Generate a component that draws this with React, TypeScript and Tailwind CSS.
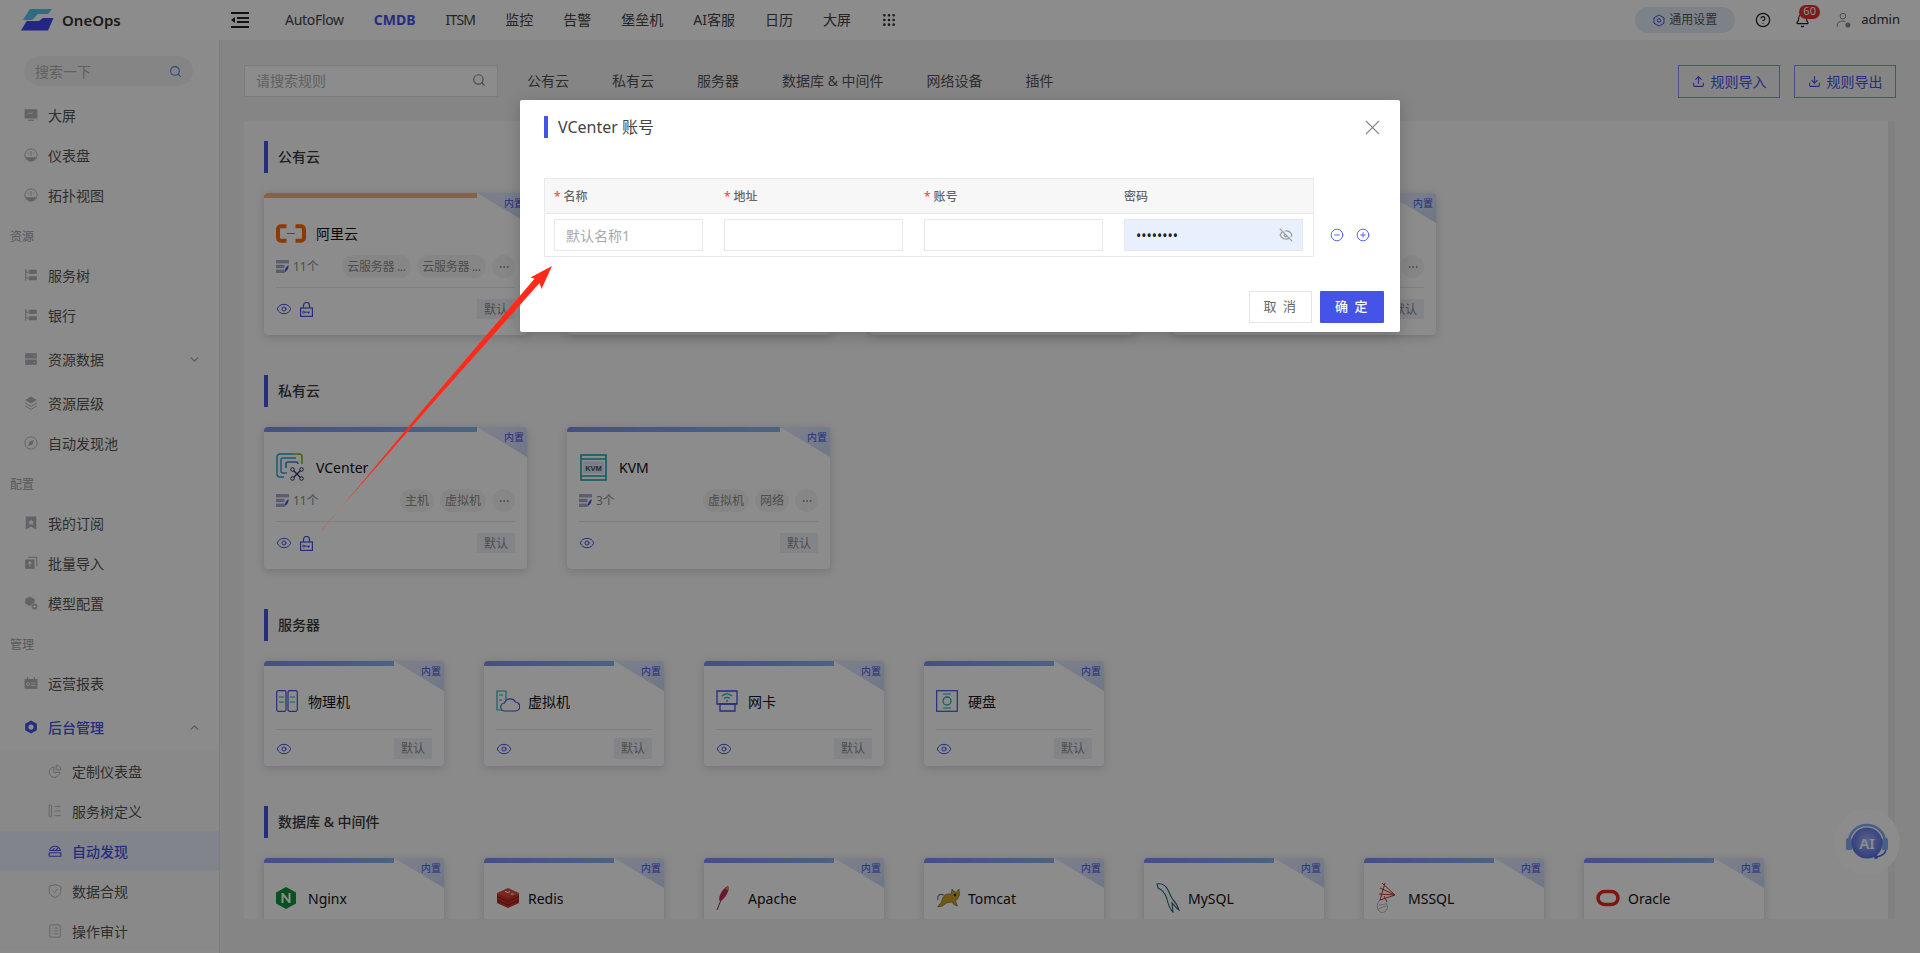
import type { ReactNode } from "react"
import { Search, ChevronDown, ChevronUp, X, Eye, EyeOff, CircleHelp, Bell, Upload, Download, CircleMinus, CirclePlus, Grip, Ellipsis } from "lucide-react"

const gray = "#b4b4bc"

function Svg({ size = 14, children }: { size?: number; children: ReactNode }) {
  return (
    <svg width={size} height={size} viewBox="0 0 24 24" fill="none" className="shrink-0">
      {children}
    </svg>
  )
}

const sideIcons: Record<string, ReactNode> = {
  screen: <><rect x="1" y="2" width="22" height="16" rx="1" fill={gray} /><path d="M6 11l3-3 3 2 4-3" stroke="#fff" strokeWidth="1.2" /><rect x="7" y="20" width="10" height="2" fill={gray} /></>,
  gauge: <><circle cx="12" cy="12" r="10.5" stroke={gray} strokeWidth="1.6" /><path d="M2 16h20c-2 4-5 6.500-10 6.500S4 20 2 16z" fill={gray} /><path d="M12 5v8M6 8l2 2M18 8l-2 2" stroke={gray} strokeWidth="1.6" /></>,
  tree: <><path d="M3 2v20M3 7h4M3 17h4" stroke={gray} strokeWidth="2" /><rect x="8" y="3" width="14" height="7" fill={gray} /><rect x="8" y="14" width="14" height="7" fill={gray} /></>,
  data: <><rect x="2" y="2" width="20" height="9" fill={gray} /><rect x="2" y="13" width="20" height="9" fill={gray} /><path d="M16 6.500h3M16 17.500h3" stroke="#fff" strokeWidth="1.500" /></>,
  layers: <><path d="M12 1l10 6-10 6L2 7z" fill={gray} /><path d="M2 12l10 6 10-6M2 17l10 6 10-6" stroke={gray} strokeWidth="1.700" /></>,
  compass: <><circle cx="12" cy="12" r="10.500" stroke={gray} strokeWidth="1.600" /><path d="M17 7l-2.500 7.500L7 17l2.500-7.500z" fill={gray} /></>,
  bookmark: <><path d="M3 1h18v22l-9-5-9 5z" fill={gray} /><path d="M12 6l1.500 3 3.500.500-2.500 2.500.600 3.500-3.100-1.700-3.100 1.700.600-3.500L7 9.500l3.500-.500z" fill="#fff" /></>,
  batch: <><path d="M7 2h15v15" stroke={gray} strokeWidth="1.800" /><rect x="2" y="6" width="16" height="16" fill={gray} /><path d="M10 10v8M7 13l3-3 3 3" stroke="#fff" strokeWidth="1.800" /></>,
  model: <><path d="M10 1l8 4v8l-8 4-8-4V5z" fill={gray} /><circle cx="18" cy="18" r="5.500" fill={gray} stroke="#fff" /><path d="M15.500 18h5M18 15.500v5" stroke="#fff" strokeWidth="1.500" /></>,
  report: <><rect x="1" y="5" width="22" height="17" fill={gray} /><path d="M6 2v5M18 2v5" stroke={gray} strokeWidth="2" /><circle cx="7" cy="14" r="2.500" stroke="#fff" strokeWidth="1.500" /><path d="M12 12h8M12 16h8" stroke="#fff" strokeWidth="1.500" /></>,
  admin: <><path d="M12 1l10 5.500v11L12 23 2 17.500v-11z" fill="#4553e6" /><circle cx="12" cy="12" r="4.500" fill="#fff" /></>,
  pie: <><path d="M20 14a9 9 0 1 1-10-9v10z" stroke={gray} strokeWidth="1.600" /><path d="M14 2a8 8 0 0 1 8 8h-8z" stroke={gray} strokeWidth="1.600" /></>,
  treeLine: <><rect x="2" y="2" width="4" height="20" rx="1" stroke={gray} strokeWidth="1.500" /><path d="M11 4h11M11 12h11M11 20h11" stroke={gray} strokeWidth="1.500" /></>,
  disc: <><path d="M3 11c1-5 5-7 9-7s8 2 9 7zM8 11l3-4M13 11l4-4" stroke="#4553e6" strokeWidth="1.800" /><rect x="2" y="15" width="20" height="6" rx="1" stroke="#4553e6" strokeWidth="2" /></>,
  shield: <><path d="M12 1l10 3v9c0 5-4 8-10 10C6 21 2 18 2 13V4z" stroke={gray} strokeWidth="1.600" /><path d="M8 12l3 3 5-6" stroke={gray} strokeWidth="1.600" /></>,
  audit: <><rect x="3" y="1.500" width="18" height="21" rx="1" stroke={gray} strokeWidth="1.600" /><path d="M7 7h1M11 7h6M7 12h1M11 12h6M7 17h1M11 17h6" stroke={gray} strokeWidth="1.600" /></>,
}

type SideEntry =
  | { kind: "label"; text: string }
  | { kind: "item"; text: string; icon: string; arrow?: "down" | "up"; active?: boolean }
  | { kind: "sub"; text: string; icon: string; active?: boolean }

const sideEntries: SideEntry[] = [
  { kind: "item", text: "大屏", icon: "screen" },
  { kind: "item", text: "仪表盘", icon: "gauge" },
  { kind: "item", text: "拓扑视图", icon: "gauge" },
  { kind: "label", text: "资源" },
  { kind: "item", text: "服务树", icon: "tree" },
  { kind: "item", text: "银行", icon: "tree" },
  { kind: "item", text: "资源数据", icon: "data", arrow: "down" },
  { kind: "item", text: "资源层级", icon: "layers" },
  { kind: "item", text: "自动发现池", icon: "compass" },
  { kind: "label", text: "配置" },
  { kind: "item", text: "我的订阅", icon: "bookmark" },
  { kind: "item", text: "批量导入", icon: "batch" },
  { kind: "item", text: "模型配置", icon: "model" },
  { kind: "label", text: "管理" },
  { kind: "item", text: "运营报表", icon: "report" },
  { kind: "item", text: "后台管理", icon: "admin", arrow: "up", active: true },
  { kind: "sub", text: "定制仪表盘", icon: "pie" },
  { kind: "sub", text: "服务树定义", icon: "treeLine" },
  { kind: "sub", text: "自动发现", icon: "disc", active: true },
  { kind: "sub", text: "数据合规", icon: "shield" },
  { kind: "sub", text: "操作审计", icon: "audit" },
]

function Sidebar() {
  return (
    <aside className="w-[220px] shrink-0 overflow-hidden border-r border-[#e6e6e6] bg-[#fdfdfd] pt-4">
      <div className="mr-[26px] mb-[9px] ml-6 flex h-[30px] items-center justify-between rounded-full bg-[#f3f3f3] px-[11px] text-[14px] text-[#b0b0b0]">
        搜索一下
        <Search size={13} color="#3f8be8" strokeWidth={2} />
      </div>
      {sideEntries.map((e) => {
        if (e.kind === "label") {
          return <div key={e.text} className="flex h-10 items-center pt-[3px] pl-[10px] text-[12px] text-[#a3a3a3]">{e.text}</div>
        }
        if (e.kind === "sub") {
          return (
            <div key={e.text} className={`flex h-10 items-center gap-[10px] pl-[48px] text-[14px] ${e.active ? "bg-[#ecf1fc] font-medium text-[#4553e6]" : "bg-[#fafafa] text-[#555]"}`}>
              <Svg>{sideIcons[e.icon]}</Svg>
              {e.text}
            </div>
          )
        }
        return (
          <div key={e.text} className={`flex items-center gap-[10px] pr-[18px] pl-6 text-[14px] ${e.arrow ? "h-12" : "h-10"} ${e.active ? "font-medium text-[#4553e6]" : "text-[#555]"}`}>
            <Svg>{sideIcons[e.icon]}</Svg>
            <span className="flex-1">{e.text}</span>
            {e.arrow === "down" && <ChevronDown size={13} color="#a5a5a5" strokeWidth={2.5} />}
            {e.arrow === "up" && <ChevronUp size={13} color="#a5a5a5" strokeWidth={2.5} />}
          </div>
        )
      })}
    </aside>
  )
}

function Logo() {
  return (
    <svg width="33" height="22" viewBox="0 0 33 22" className="shrink-0">
      <path d="M9 0h22l-4 5H17l-6 6H2z" fill="#52c4f5" />
      <path d="M0 21.500L5.700 12H18l4-3h10.500L27 21.500z" fill="#3d48ee" />
    </svg>
  )
}

function Header() {
  const nav = [
    { text: "AutoFlow", cls: "tracking-[-0.3px]" },
    { text: "CMDB", cls: "font-bold text-[#4553e6]" },
    { text: "ITSM", cls: "tracking-[-0.8px]" },
    { text: "监控", cls: "" },
    { text: "告警", cls: "" },
    { text: "堡垒机", cls: "" },
    { text: "AI客服", cls: "" },
    { text: "日历", cls: "" },
    { text: "大屏", cls: "" },
  ]
  return (
    <header className="flex h-10 shrink-0 items-center bg-white pr-5 pl-[21px]">
      <Logo />
      <span className="ml-2 w-[169px] text-[15px] font-semibold text-[#333]">OneOps</span>
      <svg width="18" height="16" viewBox="0 0 18 16" className="shrink-0">
        <path d="M0 1h18M6 6h12M6 10h12M0 15h18" stroke="#222" strokeWidth="2" />
        <path d="M0 8l4-3v6z" fill="#222" />
      </svg>
      <nav className="ml-9 flex items-center gap-[30px] pb-px text-[14px] text-[#444]">
        {nav.map((n) => (
          <span key={n.text} className={n.cls}>{n.text}</span>
        ))}
        <Grip size={16} color="#333" />
      </nav>
      <div className="ml-auto flex h-[26px] w-[100px] items-center justify-center gap-1 rounded-full bg-[#e4ecf8] text-[12px] text-[#555]">
        <svg width="12" height="13" viewBox="0 0 24 24" fill="none"><path d="M12 1l10 5.500v11L12 23 2 17.500v-11z" stroke="#4553e6" strokeWidth="2" /><circle cx="12" cy="12" r="3.500" stroke="#4553e6" strokeWidth="2" /></svg>
        通用设置
      </div>
      <CircleHelp size={16} color="#222" strokeWidth={1.8} className="ml-5" />
      <div className="relative ml-[24px]">
        <Bell size={15} color="#222" strokeWidth={1.8} />
        <span className="absolute -top-[8px] left-[4px] flex h-[14px] w-[21px] items-center justify-center rounded-full bg-[#e8312f] text-[11px] text-white">60</span>
      </div>
      <svg width="15" height="17" viewBox="0 0 24 26" fill="none" className="ml-[26px]">
        <circle cx="11" cy="6" r="4.500" stroke="#888" strokeWidth="1.600" />
        <path d="M2 23v-3c0-4 4-6 9-6 2 0 3 .300 4 .800" stroke="#888" strokeWidth="1.600" />
        <circle cx="19" cy="20" r="4" fill="#888" />
      </svg>
      <span className="ml-[10px] text-[13px] text-[#333]">admin</span>
    </header>
  )
}

function LockIcon() {
  return (
    <svg width="13" height="15" viewBox="0 0 13 15" fill="none" className="shrink-0">
      <path d="M3.500 6V3.500a3 3 0 0 1 6 0V6" stroke="#4553e6" strokeWidth="1.200" />
      <rect x="0.600" y="6" width="11.800" height="8.400" stroke="#4553e6" strokeWidth="1.200" />
      <circle cx="3.700" cy="10.200" r="1" stroke="#4553e6" />
      <path d="M5 10.200h5M8.500 10.200v1.500" stroke="#4553e6" />
    </svg>
  )
}

const productIcons: Record<string, ReactNode> = {
  aliyun: (
    <svg width="30" height="19" viewBox="0 0 30 19" fill="none">
      <path d="M10.500 2.200H5A3 3 0 0 0 2 5.200v8.600a3 3 0 0 0 3 3h5.500M19.500 2.200H25a3 3 0 0 1 3 3v8.600a3 3 0 0 1-3 3h-5.500" stroke="#ff6a00" strokeWidth="4" />
      <path d="M11 9.500h8" stroke="#ff6a00" strokeWidth="1.200" />
    </svg>
  ),
  vcenter: (
    <svg width="29" height="28" viewBox="0 0 29 28" fill="none">
      <path d="M8 24H4a3 3 0 0 1-3-3V4a3 3 0 0 1 3-3h13" stroke="#22a7c4" strokeWidth="1.500" />
      <path d="M17 1h6a3 3 0 0 1 3 3v7" stroke="#6dbb1e" strokeWidth="1.500" />
      <path d="M11 20H7a2 2 0 0 1-2-2V7a2 2 0 0 1 2-2h13" stroke="#3aa0d0" strokeWidth="1.500" />
      <path d="M10 15v-4a2 2 0 0 1 2-2h8a2 2 0 0 1 2 2" stroke="#3c7fc0" strokeWidth="1.500" />
      <path d="M17 17l8 8M25 17l-8 8" stroke="#2b3a6e" strokeWidth="1.300" />
      <circle cx="16.500" cy="16.500" r="1.800" fill="#fff" stroke="#2b3a6e" />
      <circle cx="25.500" cy="16.500" r="1.800" fill="#fff" stroke="#2b3a6e" />
      <circle cx="16.500" cy="25.500" r="1.800" fill="#fff" stroke="#2b3a6e" />
      <circle cx="25.500" cy="25.500" r="1.800" fill="#fff" stroke="#2b3a6e" />
    </svg>
  ),
  kvm: (
    <svg width="27" height="27" viewBox="0 0 27 27" fill="none" className="ml-px">
      <rect x="1" y="1" width="25" height="25" stroke="#1ea5b0" strokeWidth="1.600" />
      <path d="M1 5h25M1 22h25" stroke="#1ea5b0" strokeWidth="1.400" />
      <rect x="3" y="7.500" width="21" height="12" fill="#dfe7f3" />
      <text x="13.500" y="16.500" textAnchor="middle" fontSize="7.500" fontWeight="700" fill="#394a76" fontFamily="Liberation Sans, sans-serif">KVM</text>
    </svg>
  ),
  server: (
    <svg width="22" height="22" viewBox="0 0 22 22" fill="none">
      <rect x="0.700" y="0.700" width="9.300" height="20.600" rx="1.500" stroke="#4553e6" strokeWidth="1.200" />
      <rect x="12" y="0.700" width="9.300" height="20.600" rx="1.500" stroke="#4553e6" strokeWidth="1.200" />
      <path d="M3 7h5M3 12h5M14 7h5M14 12h5" stroke="#1eb5b0" strokeWidth="1.200" />
    </svg>
  ),
  vm: (
    <svg width="24" height="22" viewBox="0 0 24 22" fill="none">
      <path d="M9 20H1V1h9v9" stroke="#1eb5b0" strokeWidth="1.200" />
      <path d="M3 5h4M3 10h3" stroke="#1eb5b0" />
      <path d="M9 21a4 4 0 0 1-.500-8 6 6 0 0 1 11-1 4.500 4.500 0 0 1-.500 9z" fill="#fff" stroke="#4553e6" strokeWidth="1.200" />
    </svg>
  ),
  nic: (
    <svg width="22" height="22" viewBox="0 0 22 22" fill="none">
      <path d="M1 14V1h20v13z" stroke="#4553e6" strokeWidth="1.300" />
      <path d="M4 14h15v7H4z" stroke="#4553e6" strokeWidth="1.300" />
      <path d="M6 6c3-2.500 7-2.500 10 0M8 8.500c2-1.500 4-1.500 6 0" stroke="#1eb5b0" strokeWidth="1.200" />
      <circle cx="11" cy="11" r="1" fill="#1eb5b0" />
    </svg>
  ),
  disk: (
    <svg width="22" height="22" viewBox="0 0 22 22" fill="none">
      <rect x="0.700" y="0.700" width="20.600" height="20.600" stroke="#4553e6" strokeWidth="1.200" />
      <path d="M7 4h8M7 18h8" stroke="#1eb5b0" strokeWidth="1.200" />
      <circle cx="11" cy="11" r="4" stroke="#1eb5b0" strokeWidth="1.300" />
    </svg>
  ),
  nginx: (
    <svg width="20" height="22" viewBox="0 0 20 22">
      <path d="M10 0l10 5.500v11L10 22 0 16.500v-11z" fill="#129439" />
      <path d="M5.500 16V6h1.800l5.200 6.500V6h2v10h-1.800L7.500 9.500V16z" fill="#fff" />
    </svg>
  ),
  redis: (
    <svg width="24" height="20" viewBox="0 0 24 20">
      <path d="M12 9L1 5v10l11 5 11-5V5z" fill="#c7352a" />
      <path d="M1 8.500l11 5 11-5M1 12l11 5 11-5" stroke="#8a1f18" fill="none" />
      <path d="M12 0L1 5l11 5 11-5z" fill="#de4a3a" />
      <path d="M9 3.500l3 1 2-1M15 6h3" stroke="#fff" fill="none" />
    </svg>
  ),
  apache: (
    <svg width="14" height="26" viewBox="0 0 14 26" fill="none">
      <path d="M12 1c1.500 3-.500 8-3 11-2 2.500-4 4-5.500 4C2 11 7 3 12 1z" fill="#c22d5c" />
      <path d="M12 1c1 1 1 3 .500 4.500L9 4z" fill="#f08a24" />
      <path d="M5 15L1 25" stroke="#7a2a70" />
    </svg>
  ),
  tomcat: (
    <svg width="24" height="20" viewBox="0 0 24 20">
      <path d="M9 7l2-1h4l1-5 2.500 3h2L23 1l.500 6-2 4-2 2 2 5-3-1-3-3-5 1-4 3-5 1 4-5 1-4z" fill="#c9a227" stroke="#5a4a10" strokeWidth=".500" />
      <path d="M8 7C3 5 1 8 2 12" fill="none" stroke="#777" strokeWidth="1.200" />
      <circle cx="19" cy="7" r="1.200" fill="#222" />
    </svg>
  ),
  mysql: (
    <svg width="24" height="30" viewBox="0 0 24 30" fill="none">
      <path d="M1 1c5-1 9 2 11 6 2 4 3 8 6 11 2 2 4 6 5 9-3-2-5-5-7-7l1 9c-3-3-5-8-6-13C9 10 5 6 2 5z" stroke="#27657f" strokeWidth="1.100" />
    </svg>
  ),
  mssql: (
    <svg width="20" height="32" viewBox="0 0 20 32" fill="none">
      <path d="M6 1l13 12L4 18l5-17M4 6l15 7M3 12l16 1M8 14l3 6" stroke="#c4382e" strokeWidth="1" />
      <path d="M4 18c-3 3-4 8-1 11s7 1 8-2c1-2 0-4-1-6" stroke="#b5b5b5" strokeWidth="1" />
      <path d="M3 23l7-1M2 27l8-3" stroke="#b5b5b5" strokeWidth=".800" />
    </svg>
  ),
  oracle: (
    <svg width="24" height="18" viewBox="0 0 24 18" fill="none">
      <rect x="2" y="2.500" width="20" height="13" rx="6.500" stroke="#e02a1c" strokeWidth="3.500" />
    </svg>
  ),
}

function Tag({ children, circle }: { children?: ReactNode; circle?: boolean }) {
  const long = typeof children === "string" && children.length > 5
  return (
    <span className={`flex h-[23px] items-center justify-center rounded-full bg-[#f5f5f5] text-[12px] whitespace-nowrap text-[#8c8c8c] ${circle ? "w-[23px]" : long ? "w-[69px] tracking-[-0.3px]" : "px-[5px]"}`}>
      {children ?? <Ellipsis size={12} color="#8c8c8c" />}
    </span>
  )
}

function CountIcon() {
  return (
    <svg width="13" height="13" viewBox="0 0 13 13" className="shrink-0">
      <rect x="0" y="0" width="13" height="3.400" fill="#a4a9c6" />
      <rect x="0" y="4.800" width="8.500" height="3.400" fill="#a4a9c6" />
      <rect x="0" y="9.600" width="8.500" height="3.400" fill="#a4a9c6" />
      <path d="M12.500 5c.500 3-1.500 6-4 7.500 0-3 1.500-6 4-7.500z" fill="#4553e6" />
    </svg>
  )
}

type CardInfo = { name?: string; icon?: string; count?: string; tags?: string[]; lock?: boolean; orange?: boolean }

function Card({ name, icon, count, tags, lock, orange, wide }: CardInfo & { wide?: boolean }) {
  return (
    <div className={`relative shrink-0 overflow-hidden rounded-[4px] bg-white shadow-[0_2px_8px_rgba(90,100,140,0.28)] ${wide ? "h-[142px] w-[263px]" : "h-[105px] w-[180px]"}`}>
      <div className={`h-[5px] ${orange ? "bg-[#ffb07a]" : "bg-gradient-to-r from-[#7f90f0] to-[#8fc0e8]"}`} />
      <div className="absolute top-0 right-0 h-[30px] w-[50px] bg-white" />
      <div className="absolute top-0 right-0 h-[30px] w-[50px] bg-gradient-to-br from-[#e4ebfc] to-[#cdd7f6] [clip-path:polygon(0_0,100%_0,100%_100%)]" />
      <span className="absolute top-[3px] right-[3px] text-[10px] leading-[14px] text-[#4553e6]">内置</span>
      <div className="flex h-full flex-col px-3 pt-[21px]">
        <div className="flex h-[28px] shrink-0 items-center">
          <div className={`flex items-center justify-start ${wide ? "w-[40px]" : "w-[32px]"}`}>{icon && productIcons[icon]}</div>
          <span className="text-[14px] text-[#111]">{name}</span>
        </div>
        {wide && (
          <div className="mt-2 flex h-[23px] shrink-0 items-center">
            <CountIcon />
            <span className="ml-1 flex-1 text-[12px] text-[#8c8c8c]">{count}</span>
            <div className="flex items-center gap-[6px]">
              {tags?.map((t, i) => <Tag key={i}>{t}</Tag>)}
              <Tag circle />
            </div>
          </div>
        )}
        <div className={`h-px shrink-0 bg-[#e6e6e6] ${wide ? "mt-[9px]" : "mt-[14px]"}`} />
        <div className={`flex shrink-0 items-center ${wide ? "mt-[11px] h-5" : "mt-[8px] h-[21px]"}`}>
          <Eye size={16} color="#4553e6" strokeWidth={1.5} />
          {lock && <span className="ml-2"><LockIcon /></span>}
          <span className="ml-auto flex h-full w-[38px] items-center justify-center bg-[#edf1f7] pt-px text-[12px] text-[#8c8c8c]">默认</span>
        </div>
      </div>
    </div>
  )
}

function Section({ title, cards, wide }: { title: string; cards: CardInfo[]; wide?: boolean }) {
  return (
    <section className="mb-10">
      <div className="flex h-8 items-center border-l-4 border-[#4553e6] pb-[2px] pl-[10px] text-[14px] font-medium text-[#3a3a3a]">{title}</div>
      <div className="mt-5 flex gap-10">
        {cards.map((c, i) => <Card key={i} {...c} wide={wide} />)}
      </div>
    </section>
  )
}

function MainContent() {
  const tabs = ["公有云", "私有云", "服务器", "数据库 & 中间件", "网络设备", "插件"]
  return (
    <main className="flex min-w-0 flex-1 flex-col bg-[#f2f2f2] pt-[25px] pb-[34px] pl-6">
      <div className="flex h-8 shrink-0 items-center pr-6">
        <div className="flex h-8 w-[254px] items-center justify-between border border-[#e4e4e4] bg-white px-[11px] pb-[2px] text-[14px] text-[#b0b0b0]">
          请搜索规则
          <Search size={14} color="#888" />
        </div>
        <div className="ml-[29px] flex gap-[43px] pb-[2px] text-[14px] text-[#555]">
          {tabs.map((t) => <span key={t}>{t}</span>)}
        </div>
        <div className="ml-auto flex gap-[14px]">
          <button className="flex h-[33px] w-[102px] items-center justify-center gap-[6px] border border-[#8095e8] text-[14px] text-[#4553e6]"><Upload size={13} />规则导入</button>
          <button className="flex h-[33px] w-[102px] items-center justify-center gap-[6px] border border-[#8095e8] text-[14px] text-[#4553e6]"><Download size={13} />规则导出</button>
        </div>
      </div>
      <div className="mt-6 flex min-h-0 flex-1">
        <div className="min-w-0 flex-1 overflow-hidden bg-[#fbfbfb] pt-5 pl-5">
          <Section
            title="公有云"
            wide
            cards={[
              { icon: "aliyun", name: "阿里云", count: "11个", tags: ["云服务器 ...", "云服务器 ..."], lock: true, orange: true },
              { orange: true },
              {},
              { tags: ["EC2"], lock: true },
            ]}
          />
          <Section
            title="私有云"
            wide
            cards={[
              { name: "VCenter", icon: "vcenter", count: "11个", tags: ["主机", "虚拟机"], lock: true },
              { name: "KVM", icon: "kvm", count: "3个", tags: ["虚拟机", "网络"] },
            ]}
          />
          <Section
            title="服务器"
            cards={[
              { name: "物理机", icon: "server" },
              { name: "虚拟机", icon: "vm" },
              { name: "网卡", icon: "nic" },
              { name: "硬盘", icon: "disk" },
            ]}
          />
          <Section
            title="数据库 & 中间件"
            cards={[
              { name: "Nginx", icon: "nginx" },
              { name: "Redis", icon: "redis" },
              { name: "Apache", icon: "apache" },
              { name: "Tomcat", icon: "tomcat" },
              { name: "MySQL", icon: "mysql" },
              { name: "MSSQL", icon: "mssql" },
              { name: "Oracle", icon: "oracle" },
            ]}
          />
        </div>
        <div className="w-[7px] shrink-0 bg-[#ececec]" />
        <div className="w-[25px] shrink-0" />
      </div>
    </main>
  )
}

function AccountDialog() {
  const cols = [
    { label: "名称", required: true, w: "w-[149px]", ml: "ml-[9px]" },
    { label: "地址", required: true, w: "w-[179px]", ml: "ml-[21px]" },
    { label: "账号", required: true, w: "w-[179px]", ml: "ml-[21px]" },
    { label: "密码", required: false, w: "w-[179px]", ml: "ml-[21px]" },
  ]
  return (
    <div className="absolute top-[100px] left-[520px] z-20 flex h-[232px] w-[880px] flex-col rounded-[2px] bg-white pt-4 shadow-[0_4px_16px_rgba(0,0,0,0.2)]">
      <div className="flex h-[22px] items-center pr-[15px] pl-6">
        <div className="h-[22px] w-1 bg-[#4553e6]" />
        <span className="ml-[10px] flex-1 text-[16px] text-[#444]">VCenter 账号</span>
        <X size={25} color="#888" strokeWidth={1.1} />
      </div>
      <div className="mt-10 ml-6 flex items-center">
        <div className="w-[770px] border border-[#e9e9e9] text-[12px] font-medium text-[#666]">
          <div className="flex h-[35px] items-center border-b border-[#e9e9e9] bg-[#f7f7f7] pt-[2px]">
            {cols.map((c) => (
              <div key={c.label} className={`${c.w} ${c.ml} shrink-0`}>
                {c.required && <span className="mr-[3px] text-[#f5484d]">*</span>}
                {c.label}
              </div>
            ))}
          </div>
          <div className="flex h-[42px] items-center">
            {cols.map((c, i) => (
              <div key={c.label} className={`relative ${c.w} ${c.ml} shrink-0`}>
                <input
                  type={i === 3 ? "password" : "text"}
                  readOnly
                  placeholder={i === 0 ? "默认名称1" : ""}
                  defaultValue={i === 3 ? "12345678" : ""}
                  className={`h-8 w-full border border-[#e5e8f0] px-[11px] text-[14px] font-normal text-[#222] outline-none placeholder:text-[#a9a9a9] ${i === 3 ? "bg-[#e8f0fe]" : "bg-white"}`}
                />
                {i === 3 && (
                  <span className="absolute top-[9px] right-[10px]"><EyeOff size={14} color="#9a9a9a" /></span>
                )}
              </div>
            ))}
          </div>
        </div>
        <div className="ml-4 flex gap-[12px] pt-[35px]">
          <CircleMinus size={14} color="#4553e6" strokeWidth={1.5} />
          <CirclePlus size={14} color="#4553e6" strokeWidth={1.5} />
        </div>
      </div>
      <div className="mt-[34px] flex justify-end gap-2 pr-4">
        <button className="h-8 w-[63px] border border-[#e5e5e5] bg-white text-[13px] tracking-[1.500px] text-[#666]">取 消</button>
        <button className="h-8 w-[64px] rounded-[1px] bg-[#4553e6] text-[13px] font-medium tracking-[1.500px] text-white">确 定</button>
      </div>
    </div>
  )
}

export default function App() {
  return (
    <div className="relative flex h-[953px] w-[1920px] flex-col overflow-hidden font-['Noto_Sans','Noto_Sans_CJK_SC',sans-serif]">
      <Header />
      <div className="flex min-h-0 flex-1">
        <Sidebar />
        <MainContent />
      </div>
      <div className="absolute top-[809px] left-[1834px] flex h-[66px] w-[66px] items-center justify-center rounded-full bg-white">
        <svg width="44" height="44" viewBox="0 0 44 44" fill="none" className="absolute">
          <defs>
            <radialGradient id="aiBall" cx="0.5" cy="0.45" r="0.6">
              <stop offset="0" stopColor="#a9b8f5" />
              <stop offset="1" stopColor="#4f6ae8" />
            </radialGradient>
          </defs>
          <path d="M4 22a18 17 0 0 1 36 0" stroke="#86b0f5" strokeWidth="2.500" />
          <rect x="1" y="18" width="6" height="12" rx="1.500" fill="#86b0f5" />
          <rect x="37" y="18" width="6" height="12" rx="1.500" fill="#86b0f5" />
          <circle cx="22" cy="23" r="15.500" fill="url(#aiBall)" />
          <path d="M41 30c-1 4-5 6-9 7" stroke="#4f6fd8" strokeWidth="1.500" />
          <circle cx="31" cy="37" r="2" fill="#4f6fd8" />
        </svg>
        <span className="relative mt-[2px] text-[15px] font-semibold text-white">AI</span>
      </div>
      <div className="absolute inset-0 z-10 bg-black/45" />
      <AccountDialog />
      <svg className="pointer-events-none absolute inset-0 z-30" width="1920" height="953" viewBox="0 0 1920 953">
        <defs>
          <linearGradient id="arrowFade" gradientUnits="userSpaceOnUse" x1="321" y1="531" x2="350" y2="498">
            <stop offset="0" stopColor="#ff2a1a" stopOpacity="0.4" />
            <stop offset="1" stopColor="#ff2a1a" />
          </linearGradient>
        </defs>
        <path d="M320.700 530.800L431 405 539.500 283 541.500 289 552 266 530.500 277.500 534.500 278.700 428.500 402.800 321.300 531.200z" fill="url(#arrowFade)" />
      </svg>
    </div>
  )
}
